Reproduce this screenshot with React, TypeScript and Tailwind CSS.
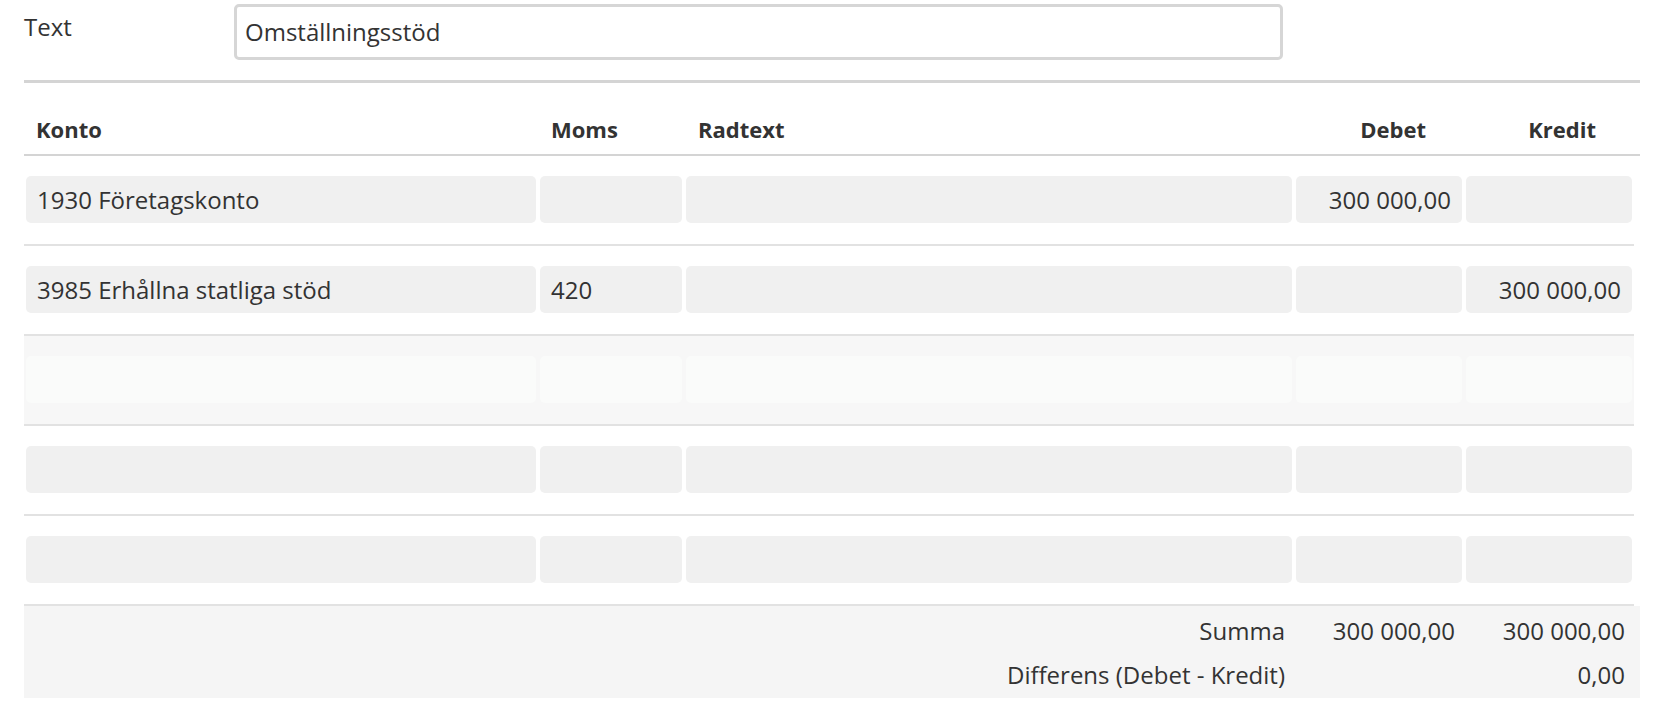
import React from "react"

// Journal entry rows
interface Row {
  konto: string
  moms: string
  radtext: string
  debet: string
  kredit: string
  ghost?: boolean
}

const rows: Row[] = [
  { konto: "1930 Företagskonto", moms: "", radtext: "", debet: "300 000,00", kredit: "" },
  { konto: "3985 Erhållna statliga stöd", moms: "420", radtext: "", debet: "", kredit: "300 000,00" },
  { konto: "", moms: "", radtext: "", debet: "", kredit: "", ghost: true },
  { konto: "", moms: "", radtext: "", debet: "", kredit: "" },
  { konto: "", moms: "", radtext: "", debet: "", kredit: "" },
]

const cols = "grid grid-cols-[510px_142px_606px_166px_166px] gap-x-[4px] pl-[2px]"

function Cell({ value, right, ghost }: { value: string; right?: boolean; ghost?: boolean }) {
  return (
    <div
      className={`flex h-[47px] items-center rounded-[5px] px-[11px] ${right ? "justify-end" : ""} ${
        ghost ? "bg-[#fafbfa]" : "bg-[#f0f0f0]"
      }`}
    >
      {value}
    </div>
  )
}

export default function App() {
  return (
    <div
      className="min-h-[712px] bg-white pl-[24px] text-[24px] text-[#333333]"
      style={{ fontFamily: '"Open Sans", "Noto Sans", sans-serif' }}
    >
      <div className="w-[1616px]">
        {/* Text field */}
        <div className="flex items-start pt-[4px]">
          <label className="w-[210px] pt-[6px] leading-[33px]">Text</label>
          <div className="flex h-[56px] w-[1049px] items-center rounded-[5px] border-[3px] border-[#d6d6d6] px-[8px]">
            Omställningsstöd
          </div>
        </div>

        <div className="mt-[20px] h-[3px] bg-[#d4d4d4]" />

        {/* Header */}
        <div className={`${cols} h-[73px] items-start border-b-2 border-[#d4d4d4] pt-[31px] text-[22px] leading-[30px] font-bold`}>
          <div className="pl-[10px]">Konto</div>
          <div className="pl-[11px]">Moms</div>
          <div className="pl-[12px]">Radtext</div>
          <div className="pr-[36px] text-right">Debet</div>
          <div className="pr-[36px] text-right">Kredit</div>
        </div>

        {/* Rows */}
        <div className="w-[1610px]">
          {rows.map((row, i) => (
            <div
              key={i}
              className={`${cols} h-[90px] items-start border-b-2 border-[#e2e2e2] pt-[20px] ${
                row.ghost ? "bg-[#f7f7f7]" : ""
              }`}
            >
              <Cell value={row.konto} ghost={row.ghost} />
              <Cell value={row.moms} ghost={row.ghost} />
              <Cell value={row.radtext} ghost={row.ghost} />
              <Cell value={row.debet} right ghost={row.ghost} />
              <Cell value={row.kredit} right ghost={row.ghost} />
            </div>
          ))}
        </div>

        {/* Totals */}
        <div className={`${cols} bg-[#f5f5f5] pt-[3px] pb-[1px]`}>
          <div className="col-span-3 flex h-[44px] items-center justify-end pr-[7px]">Summa</div>
          <div className="flex h-[44px] items-center justify-end pr-[7px]">300 000,00</div>
          <div className="flex h-[44px] items-center justify-end pr-[7px]">300 000,00</div>
          <div className="col-span-3 flex h-[44px] items-center justify-end pr-[7px]">Differens (Debet - Kredit)</div>
          <div className="h-[44px]" />
          <div className="flex h-[44px] items-center justify-end pr-[7px]">0,00</div>
        </div>
      </div>
    </div>
  )
}
